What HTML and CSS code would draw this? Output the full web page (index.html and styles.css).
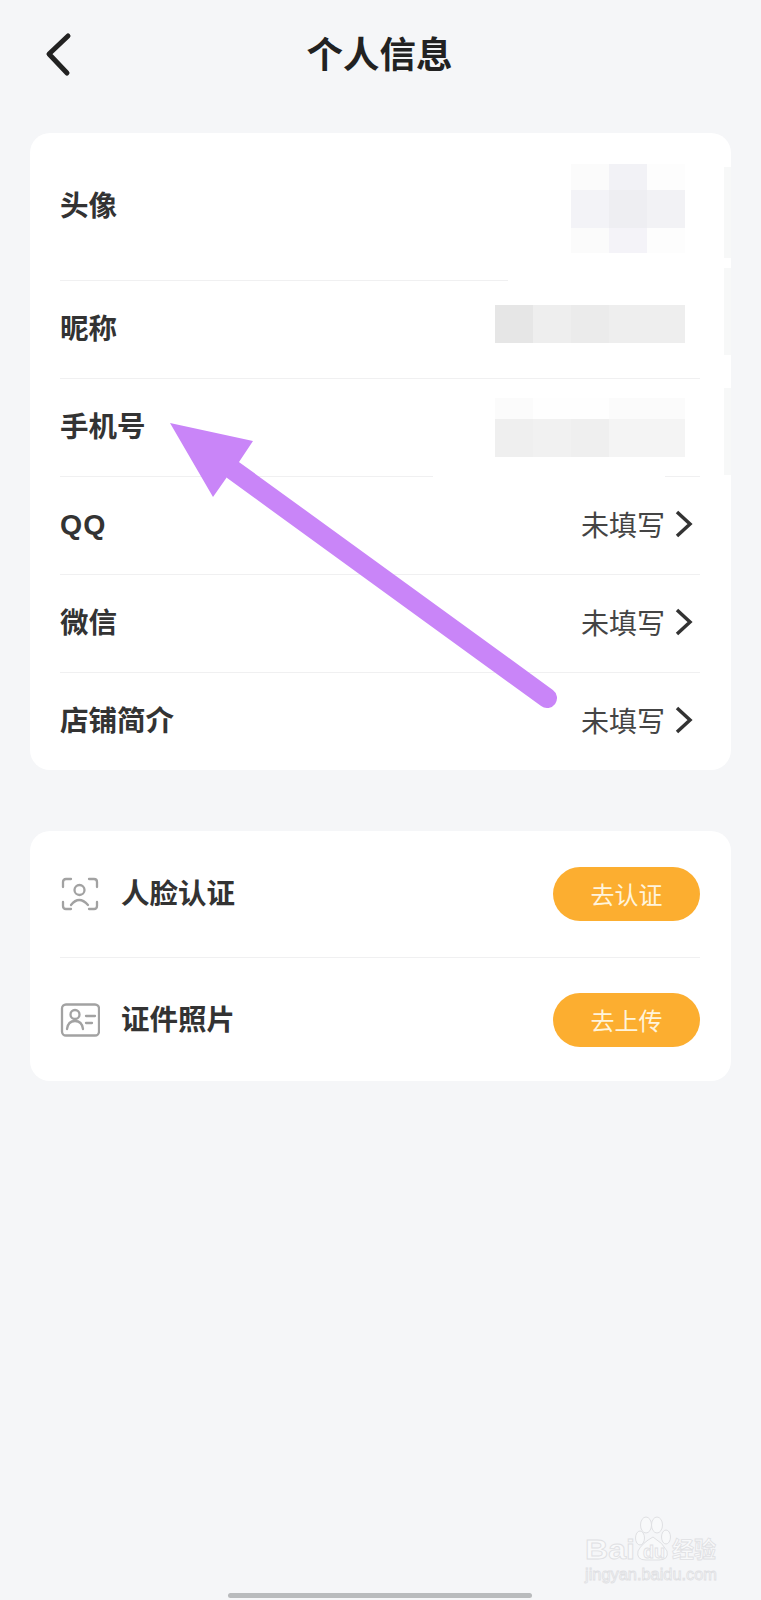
FILE: index.html
```html
<!DOCTYPE html>
<html lang="zh-CN">
  <head>
    <meta charset="UTF-8" />
    <meta name="viewport" content="width=device-width, initial-scale=1.0" />
    <title>个人信息</title>
    <link rel="stylesheet" href="styles.css">
  </head>
  <body>
    <div class="page">
      <header class="topbar">
        <svg class="back-icon" width="30" height="46" viewBox="0 0 30 46">
          <path d="M23 5 L4 23 L22 42" />
        </svg>
        <h1>个人信息</h1>
      </header>

      <section class="card">
        <div class="row row-avatar">
          <span class="label">头像</span>
          <div class="mosaic mosaic-avatar">
            <i class="m1"></i><i class="m2"></i><i class="m3"></i>
            <i class="m4"></i><i class="m5"></i><i class="m6"></i>
            <i class="m1"></i><i class="m7"></i><i class="m3"></i>
          </div>
        </div>
        <div class="row">
          <span class="label">昵称</span>
          <div class="mosaic mosaic-nick">
            <i class="n1"></i><i class="n2"></i><i class="n3"></i><i class="n4"></i><i class="n4"></i>
          </div>
        </div>
        <div class="row">
          <span class="label">手机号</span>
          <div class="mosaic mosaic-phone">
            <i class="p0"></i><i class="p00"></i><i class="p00"></i><i class="p0"></i><i class="p0"></i>
            <i class="p1"></i><i class="p2"></i><i class="p1"></i><i class="p3"></i><i class="p3"></i>
          </div>
        </div>
        <div class="row">
          <span class="label label-latin">QQ</span>
          <span class="value">未填写<svg class="more-icon" width="18" height="28" viewBox="0 0 18 28"><path d="M2 2 L15 14 L2 26" /></svg></span>
        </div>
        <div class="row">
          <span class="label">微信</span>
          <span class="value">未填写<svg class="more-icon" width="18" height="28" viewBox="0 0 18 28"><path d="M2 2 L15 14 L2 26" /></svg></span>
        </div>
        <div class="row">
          <span class="label">店铺简介</span>
          <span class="value">未填写<svg class="more-icon" width="18" height="28" viewBox="0 0 18 28"><path d="M2 2 L15 14 L2 26" /></svg></span>
        </div>

        <!-- smudges left by the blur in the screenshot -->
        <div class="smudge smudge-line1"></div>
        <div class="smudge smudge-line3"></div>
        <div class="strip strip-1"></div>
        <div class="strip strip-2"></div>
        <div class="strip strip-3"></div>
      </section>

      <section class="card card-verify">
        <div class="row row-face">
          <div class="verify-name">
            <svg class="verify-icon" width="40" height="36" viewBox="0 0 40 36">
              <path d="M3 10 V5 Q3 2 6 2 H11" />
              <path d="M29 2 H34 Q37 2 37 5 V10" />
              <path d="M3 25 V29 Q3 32 6 32 H11" />
              <path d="M29 32 H34 Q37 32 37 29 V25" />
              <circle cx="19.5" cy="13" r="5" />
              <path d="M11 28 Q19 18 28 28" />
            </svg>
            <span class="label">人脸认证</span>
          </div>
          <button class="pill">去认证</button>
        </div>
        <div class="row row-card">
          <div class="verify-name">
            <svg class="verify-icon" width="40" height="36" viewBox="0 0 40 36">
              <rect x="2" y="2.5" width="37" height="31" rx="4" />
              <circle cx="15" cy="12.5" r="4.5" />
              <path d="M7 27 Q8 19 15 19 Q22 19 23 27" />
              <path d="M26 14 H35" />
              <path d="M26 21 H32" />
            </svg>
            <span class="label">证件照片</span>
          </div>
          <button class="pill">去上传</button>
        </div>
      </section>

      <!-- annotation arrow drawn on top of the screenshot -->
      <svg class="arrow" width="761" height="1600" viewBox="0 0 761 1600">
        <path class="arrow-shaft" d="M233 470 L547 698" />
        <polygon class="arrow-head" points="170,423 253,441 239,462 227,477 213,497" />
      </svg>

      <svg class="watermark" width="170" height="80" viewBox="0 0 170 80">
        <text class="wm-bai" x="15" y="49" textLength="50" lengthAdjust="spacingAndGlyphs">Bai</text>
        <ellipse class="wm-paw" cx="76" cy="15" rx="5.5" ry="8" />
        <ellipse class="wm-paw" cx="87" cy="15" rx="5.5" ry="8" />
        <ellipse class="wm-paw" cx="70" cy="28" rx="4.5" ry="7" />
        <ellipse class="wm-paw" cx="96" cy="27" rx="4.5" ry="7" />
        <path class="wm-paw" d="M83 27 Q93 33 97 41 Q99 50 89 50 H76 Q66 50 68 41 Q72 33 83 27 Z" />
        <text class="wm-du" x="73" y="48">du</text>
        <text class="wm-cn" x="102" y="47">经验</text>
        <text class="wm-url" x="15" y="70" textLength="132" lengthAdjust="spacingAndGlyphs">jingyan.baidu.com</text>
      </svg>

      <div class="home-bar"></div>
    </div>
  </body>
</html>
```

FILE: styles.css
```css
* {
  box-sizing: border-box;
}

body {
  margin: 0;
  padding: 0;
  background-color: #f5f6f8;
  font-family: "Noto Sans CJK SC", "Noto Sans", sans-serif;
  color: #333;
}

.page {
  position: relative;
  width: 761px;
  height: 1600px;
  padding: 0 30px;
  overflow: hidden;
}

.topbar {
  position: relative;
  height: 133px;
  padding-top: 27px;
  text-align: center;
}

.topbar h1 {
  margin: 0 0 0 -2px;
  font-size: 36.5px;
  line-height: 52px;
  font-weight: 700;
  color: #222;
}

.back-icon {
  position: absolute;
  left: 15px;
  top: 31px;
}

.back-icon path {
  fill: none;
  stroke: #222;
  stroke-width: 5;
  stroke-linecap: round;
  stroke-linejoin: round;
}

.card {
  position: relative;
  height: 637px;
  padding: 0 31px 0 30px;
  background-color: #fff;
  border-radius: 20px;
}

.card-verify {
  height: 250px;
  margin-top: 61px;
}

.row {
  display: flex;
  align-items: center;
  justify-content: space-between;
  height: 98px;
  border-bottom: 1px solid #f0f0f1;
}

.row:nth-child(6) {
  height: 97px;
  border-bottom: none;
}

.row-avatar {
  height: 148px;
}

.row-face {
  height: 127px;
}

.row-card {
  height: 123px;
  border-bottom: none;
}

.label {
  font-size: 28.5px;
  line-height: 40px;
  font-weight: 700;
  color: #333;
  margin-bottom: 5px;
}

.label-latin {
  font-family: "Liberation Sans", sans-serif;
  letter-spacing: 1px;
  margin-bottom: 4px;
}

.value {
  display: flex;
  align-items: center;
  gap: 10px;
  margin-right: 7px;
  margin-bottom: 4px;
  font-size: 28px;
  line-height: 40px;
  color: #444;
}

.more-icon path {
  fill: none;
  stroke: #333;
  stroke-width: 3.5;
}

.mosaic {
  display: grid;
  margin-right: 15px;
}

.mosaic i {
  display: block;
}

.mosaic-avatar {
  grid-template-columns: repeat(3, 38px);
  grid-template-rows: 26px 38px 25px;
  margin-top: 3px;
}

.mosaic-nick {
  grid-template-columns: repeat(5, 38px);
  grid-template-rows: 38px;
  margin-bottom: 12px;
}

.mosaic-phone {
  grid-template-columns: repeat(5, 38px);
  grid-template-rows: 21px 38px;
}

.m1 { background-color: #fbfbfb; }
.m2 { background-color: #f2f2f6; }
.m3 { background-color: #fdfdfd; }
.m4 { background-color: #f3f3f7; }
.m5 { background-color: #eeeef2; }
.m6 { background-color: #f2f2f5; }
.m7 { background-color: #f4f3f8; }

.n1 { background-color: #e6e6e6; }
.n2 { background-color: #eeeeee; }
.n3 { background-color: #ebebeb; }
.n4 { background-color: #eeeeee; }

.p0 { background-color: #fbfbfb; }
.p00 { background-color: #fefefe; }
.p1 { background-color: #efefef; }
.p2 { background-color: #f1f1f1; }
.p3 { background-color: #f4f4f4; }

.smudge {
  position: absolute;
  height: 3px;
  background-color: #fff;
}

.smudge-line1 {
  top: 146px;
  left: 478px;
  right: 0;
}

.smudge-line3 {
  top: 342px;
  left: 403px;
  width: 232px;
}

.strip {
  position: absolute;
  right: 0;
  width: 7px;
  background-color: #f7f8f8;
}

.strip-1 {
  top: 34px;
  height: 91px;
}

.strip-2 {
  top: 135px;
  height: 87px;
}

.strip-3 {
  top: 255px;
  height: 87px;
}

.verify-name {
  display: flex;
  align-items: center;
  gap: 21px;
}

.verify-name .label {
  margin-bottom: 4px;
}

.verify-icon {
  flex-shrink: 0;
  margin-top: 1px;
}

.verify-icon path,
.verify-icon circle,
.verify-icon rect {
  fill: none;
  stroke: #a2a2a2;
  stroke-width: 2.3;
  stroke-linecap: round;
}

.pill {
  width: 147px;
  height: 54px;
  padding: 0;
  border: none;
  border-radius: 27px;
  background-color: #fcae30;
  color: #fff4dc;
  font-family: inherit;
  font-size: 24px;
  line-height: 54px;
}

.arrow {
  position: absolute;
  left: 0;
  top: 0;
  pointer-events: none;
}

.arrow-shaft {
  fill: none;
  stroke: #c985f8;
  stroke-width: 20;
  stroke-linecap: round;
}

.arrow-head {
  fill: #c985f8;
}

.watermark {
  position: absolute;
  left: 570px;
  top: 1510px;
}

.watermark text {
  fill: #f8f9fa;
  stroke: #dfe0e3;
  stroke-width: 0.8;
}

.wm-bai {
  font-family: "Liberation Sans", sans-serif;
  font-size: 27px;
  font-weight: 700;
}

.wm-du {
  font-family: "Liberation Sans", sans-serif;
  font-size: 18px;
  font-weight: 700;
}

.wm-cn {
  font-size: 22px;
  font-weight: 700;
}

.wm-url {
  font-family: "Liberation Sans", sans-serif;
  font-size: 16px;
}

.wm-paw {
  fill: #f8f9fa;
  stroke: #dfe0e3;
  stroke-width: 1;
}

.home-bar {
  position: absolute;
  left: 228px;
  bottom: 2px;
  width: 304px;
  height: 5px;
  border-radius: 3px;
  background-color: #b9bbbd;
}
```
